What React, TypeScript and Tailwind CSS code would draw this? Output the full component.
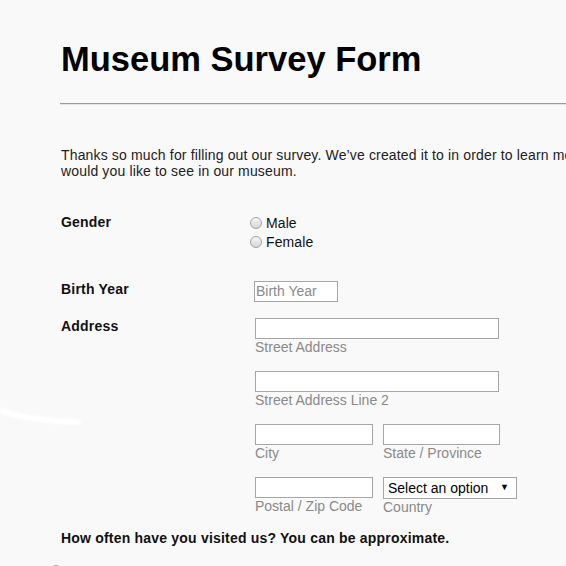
import React from "react";

function Radio({ label }: { label?: string }) {
  return (
    <label className="flex items-center h-[19px]">
      <span className="-mt-[2px] w-[12px] h-[12px] rounded-full border border-[#a3a3a3] bg-gradient-to-b from-[#f6f6f6] to-[#d6d6d6] shrink-0" />
      {label && <span className="ml-[4px] text-[14px] tracking-[0.1px] text-[#111]">{label}</span>}
    </label>
  );
}

function Field({ width, hint, placeholder }: { width: string; hint?: string; placeholder?: string }) {
  return (
    <div className="flex flex-col">
      <input
        type="text"
        placeholder={placeholder}
        className={`${width} h-[21px] border border-[#a6a6a6] bg-white px-[1px] text-[14px] outline-none placeholder:text-[#8a8a8a]`}
      />
      {hint && <span className="text-[14px] leading-4 text-[#8a8a8a]">{hint}</span>}
    </div>
  );
}

export default function App() {
  return (
    <div className="relative min-h-screen w-full overflow-hidden bg-[#f9f9f9] font-['Liberation_Sans',Arial,sans-serif]">
      <svg className="absolute left-0 top-[390px] w-[100px] h-[50px] blur-[1px]" viewBox="0 0 100 50">
        <path d="M-4 19 Q 28 31 78 32" stroke="#ffffff" strokeWidth="6" strokeLinecap="round" fill="none" />
      </svg>

      <div className="relative ml-[61px] w-[720px] pt-[40px]">
        <h1 className="text-[34.5px] leading-[39px] font-bold text-black">Museum Survey Form</h1>
        <div className="-ml-px mt-[24px] border-t border-t-[#9a9a9a] border-b border-b-[#e4e4e4]" />

        <p className="mt-[42px] text-[14px] leading-4 tracking-[0.15px] text-[#222]">
          Thanks so much for filling out our survey. We’ve created it to in order to learn more about our visitors and what
          <br />
          would you like to see in our museum.
        </p>

        <div className="mt-[35px] flex">
          <div className="w-[189px] text-[14px] leading-4 font-bold tracking-[0.2px] text-[#111]">Gender</div>
          <div className="flex flex-col">
            <Radio label="Male" />
            <Radio label="Female" />
          </div>
        </div>

        <div className="mt-[28px] flex">
          <div className="mt-px w-[189px] text-[14px] leading-4 font-bold tracking-[0.2px] text-[#111]">Birth Year</div>
          <div className="mt-px ml-[4px]">
            <Field width="w-[84px]" placeholder="Birth Year" />
          </div>
        </div>

        <div className="mt-[16px] flex">
          <div className="w-[189px] text-[14px] leading-4 font-bold tracking-[0.2px] text-[#111]">Address</div>
          <div className="ml-[5px] flex flex-col gap-[16px]">
            <Field width="w-[244px]" hint="Street Address" />
            <Field width="w-[244px]" hint="Street Address Line 2" />
            <div className="flex gap-[10px]">
              <Field width="w-[118px]" hint="City" />
              <Field width="w-[117px]" hint="State / Province" />
            </div>
            <div className="flex gap-[10px]">
              <Field width="w-[118px]" hint="Postal / Zip Code" />
              <div className="flex flex-col">
                <div className="w-[134px] h-[22px] border border-[#a6a6a6] bg-white flex items-center justify-between pl-[4px] pr-[7px] text-[14px] text-black">
                  <span>Select an option</span>
                  <span className="text-[9px]">▼</span>
                </div>
                <span className="text-[14px] leading-4 text-[#8a8a8a]">Country</span>
              </div>
            </div>
          </div>
        </div>

        <div className="mt-[15px] text-[14px] leading-4 font-bold tracking-[0.2px] text-[#111]">
          How often have you visited us? You can be approximate.
        </div>

        <div className="mt-[16px] -ml-[11px]">
          <Radio />
        </div>
      </div>
    </div>
  );
}
